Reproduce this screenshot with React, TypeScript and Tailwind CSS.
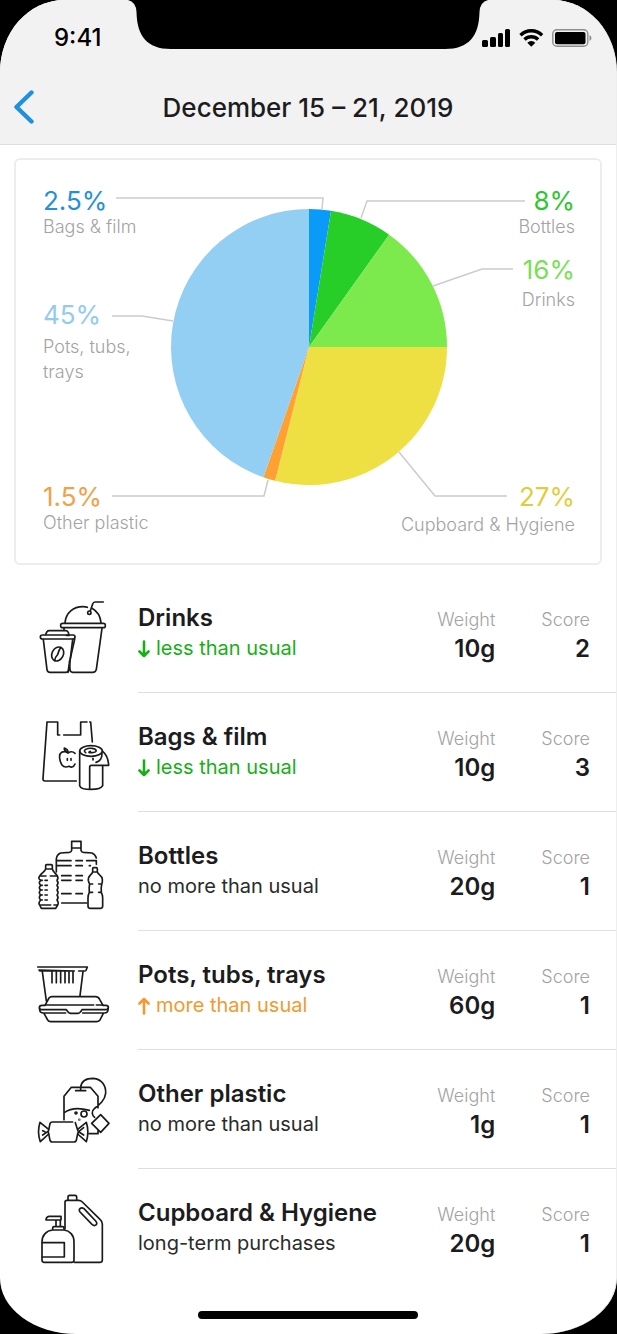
import type { ReactNode } from 'react';

type Trend = 'less' | 'more' | null;

interface Category {
  name: string;
  note: string;
  trend: Trend;
  weight: string;
  score: number;
  icon: ReactNode;
}

const slices = [
  { from: 0, to: 9.2, color: '#0a9bf8' },
  { from: 9.2, to: 35.5, color: '#27ce27' },
  { from: 35.5, to: 90, color: '#7cea4c' },
  { from: 90, to: 194.2, color: '#eee042' },
  { from: 194.2, to: 199.3, color: '#ffa033' },
  { from: 199.3, to: 360, color: '#93cff3' },
];

const leaders = [
  '100,38 307,38 306,49',
  '509,41 351,41 345,58',
  '497,109 466,109 417,126',
  '491,336 419,336 383,292',
  '96,336 248,336 252,320',
  '96,156 126,156 157,161',
];

const labels = [
  { x: 27, y: 50, value: '2.5%', color: '#2391da', lines: ['Bags & film'], textY: 73, end: false },
  { x: 27, y: 164, value: '45%', color: '#93cbef', lines: ['Pots, tubs,', 'trays'], textY: 193, end: false },
  { x: 27, y: 346, value: '1.5%', color: '#f2a246', lines: ['Other plastic'], textY: 369, end: false },
  { x: 559, y: 50, value: '8%', color: '#2fc52f', lines: ['Bottles'], textY: 73, end: true },
  { x: 559, y: 119, value: '16%', color: '#79df55', lines: ['Drinks'], textY: 146, end: true },
  { x: 559, y: 346, value: '27%', color: '#ddcf3a', lines: ['Cupboard & Hygiene'], textY: 371, end: true },
];

function slicePath(from: number, to: number) {
  const point = (deg: number) => {
    const a = (deg * Math.PI) / 180;
    return `${293 + 138 * Math.sin(a)} ${187 - 138 * Math.cos(a)}`;
  };
  return `M293 187L${point(from)}A138 138 0 ${to - from > 180 ? 1 : 0} 1 ${point(to)}Z`;
}

function LineIcon({ viewBox, children }: { viewBox: string; children: ReactNode }) {
  return (
    <svg
      viewBox={viewBox}
      className="h-20 w-20"
      fill="none"
      stroke="#1a1a1a"
      strokeWidth="5"
      strokeLinecap="round"
      strokeLinejoin="round"
      aria-hidden="true"
    >
      {children}
    </svg>
  );
}

const drinksIcon = (
  <LineIcon viewBox="42 24 240 240">
    <path d="M135 110C138 80 160 62 189 62C194 62 198 62 202 64M216 67C232 76 241 90 243 110" />
    <path d="M250 48H225Q220 48 218 54L211 74" />
    <circle cx="208" cy="80" r="5" />
    <rect x="122" y="112" width="134" height="13" rx="6" />
    <path d="M132 126V132M246 127L229 250Q227 259 218 259H158Q150 259 150 250L148 226M164 160L149 226L144 259" />
    <path d="M77 145L81 137Q83 134 88 134H137Q142 134 145 139L147 148H139" />
    <rect x="61" y="147" width="104" height="12" rx="6" />
    <path d="M70 161L81 251Q82 259 90 259H138Q145 259 147 251L158 161" />
    <ellipse cx="113" cy="204" rx="17" ry="22" transform="rotate(28 113 204)" />
    <path d="M122 185C114 195 116 202 112 207C107 212 105 218 104 223" />
  </LineIcon>
);

const bagsIcon = (
  <LineIcon viewBox="42 381 240 240">
    <path d="M169 585H75Q68 585 69 577L81 408H113V447H119M131 447H182V408H201M209 408H212L217 468" />
    <path d="M144 501C138 497 131 496 125 499C115 505 118 524 126 537C132 545 139 544 147 541C153 544 160 546 165 534M144 501C150 497 159 496 165 502M144 501C145 494 141 489 133 486C132 493 136 497 144 499" />
    <path d="M142 518V523M153 518V523" />
    <ellipse cx="213" cy="495" rx="34" ry="16" />
    <path d="M197 500C186 492 202 486 216 487C232 489 233 499 216 500C208 501 203 499 211 496" />
    <path d="M179 496V599C184 614 241 614 248 599V540M248 496C258 504 265 520 266 538H214Q209 538 209 544V608M246 503C246 520 238 526 228 529M219 517V522" />
  </LineIcon>
);

const bottlesIcon = (
  <LineIcon viewBox="42 18 240 240">
    <path d="M155 66V46H183V66M155 66H183M155 66V73Q154 78 148 79L122 81Q110 86 109 99V138M183 66V73Q184 78 190 79L216 81Q226 85 229 96" />
    <path d="M110 104H153M168 104H187M200 104H229V115M110 119H153M168 119H187M208 119H211M125 149H153M168 149H187M125 163H153M168 163H187M125 203H153M168 203H187M125 231H200" />
    <path d="M77 129V118Q77 116 80 116H94Q97 116 97 119V129M77 129H97M77 129C74 138 66 140 59 150Q53 158 62 163Q54 170 62 178Q54 185 62 192Q54 200 62 207Q54 214 62 222Q54 231 59 237L64 247H107L113 237Q117 230 111 222Q117 214 111 207Q117 200 111 192Q117 185 111 178Q117 170 111 163Q116 156 112 150C106 141 99 138 97 129" />
    <path d="M62 150H78M91 150H111M62 163H67M75 163H82M62 178H67M75 178H82M62 192H67M75 192H82M62 207H67M75 207H82M62 222H67M75 222H82M62 237H92M102 237H112" />
    <path d="M218 138V127Q218 125 221 125H229Q232 125 232 128V138M218 138H232M218 138C216 147 203 147 205 164Q207 170 209 174C206 186 208 192 208 199Q204 207 204 215V240Q204 247 211 247H241Q248 247 248 240V215Q248 207 244 199C243 191 243 184 245 176Q248 168 247 160C247 147 234 147 232 138M208 174H218M236 174H244M208 199H218M236 199H244" />
  </LineIcon>
);

const potsIcon = (
  <LineIcon viewBox="42 375 240 240">
    <path d="M53 423H202L198 433Q197 435 193 435H176M163 435H62Q58 435 57 432Z" />
    <path d="M67 437L79 525M189 437L180 509M96 437V470M109 437V470M122 437V470M135 437V470M147 437V470M159 437V470" />
    <path d="M75 538L87 516Q90 512 96 512H226Q235 512 239 520L249 538M75 537H221M229 537H249" />
    <path d="M75 538H66Q58 538 58 545Q58 551 66 551H139L145 559Q147 562 152 562H174Q179 562 182 557L186 551H257Q265 551 265 544Q265 538 257 538H249" />
    <path d="M59 547V552Q60 561 70 561H137M188 561H254Q263 561 264 552V547M72 562L83 582Q86 587 92 587H229Q236 587 240 582L250 562" />
  </LineIcon>
);

const otherIcon = (
  <LineIcon viewBox="42 27 240 240">
    <path d="M132 176V106L154 79H211L234 106V140M167 89H197M182 88V79C184 58 201 52 220 52C246 54 258 75 257 97C254 120 237 132 223 143C213 151 216 163 224 169" />
    <path d="M242 161L267 187L242 214L215 187ZM207 218H234V210M134 154C151 142 177 140 208 148" />
    <circle cx="168" cy="156" r="3" />
    <circle cx="192" cy="159" r="9" />
    <circle cx="178" cy="176" r="1" />
    <path d="M158 183H97Q92 183 90 188L86 207Q83 212 86 218L90 238Q92 243 97 243H162Q167 243 169 238L173 218Q177 212 173 207L166 185" />
    <path d="M86 205L60 184C54 203 54 223 61 242L86 219M68 222L83 212M68 209L75 212M173 205L199 184C205 203 205 223 199 242L173 219M177 211L191 200M177 213L191 222" />
  </LineIcon>
);

const cupboardIcon = (
  <LineIcon viewBox="42 384 240 240">
    <path d="M144 418V408Q144 403 149 403H165Q170 403 170 408V418M135 504V424Q135 418 141 418H176Q182 418 187 423L240 475Q247 481 247 489V597Q247 604 240 604H163" />
    <path d="M180 453C173 444 184 437 192 443L227 480C236 490 225 498 216 490Z" />
    <path d="M78 475Q80 466 88 466H123V477H78ZM108 478V496M121 478V496M98 507V501Q98 497 102 497H128Q132 497 132 501V507M98 507H132M98 507C78 509 66 524 66 542V597Q66 604 73 604H155Q162 604 162 597V542C162 522 149 509 132 507" />
    <path d="M67 545H133V588H67" />
  </LineIcon>
);

const categories: Category[] = [
  { name: 'Drinks', note: 'less than usual', trend: 'less', weight: '10g', score: 2, icon: drinksIcon },
  { name: 'Bags & film', note: 'less than usual', trend: 'less', weight: '10g', score: 3, icon: bagsIcon },
  { name: 'Bottles', note: 'no more than usual', trend: null, weight: '20g', score: 1, icon: bottlesIcon },
  { name: 'Pots, tubs, trays', note: 'more than usual', trend: 'more', weight: '60g', score: 1, icon: potsIcon },
  { name: 'Other plastic', note: 'no more than usual', trend: null, weight: '1g', score: 1, icon: otherIcon },
  { name: 'Cupboard & Hygiene', note: 'long-term purchases', trend: null, weight: '20g', score: 1, icon: cupboardIcon },
];

function StatusIcons() {
  return (
    <svg viewBox="0 0 110 18" className="h-[18px] w-[110px]" aria-hidden="true">
      <rect x="0" y="11" width="6" height="7" rx="1.5" />
      <rect x="8" y="8" width="6" height="10" rx="1.5" />
      <rect x="16" y="4" width="5" height="14" rx="1.5" />
      <rect x="23" y="0" width="5" height="18" rx="1.5" />
      <g fill="none" stroke="#000" strokeWidth="3.4">
        <path d="M38.5 6.2a15.5 15.5 0 0 1 21.6 0" />
        <path d="M42.5 10.5a9.8 9.8 0 0 1 13.6 0" />
      </g>
      <path d="M45.3 13.8a5.6 5.6 0 0 1 8 0L49.3 17.8Z" />
      <rect x="70.8" y="0.8" width="35" height="16.5" rx="4" fill="none" stroke="#8e8e8e" strokeWidth="1.4" />
      <rect x="73" y="3" width="30.5" height="12.2" rx="2" />
      <path d="M107.5 6Q109.5 7 109.5 9T107.5 12Z" fill="#8e8e8e" />
    </svg>
  );
}

function TrendArrow({ trend }: { trend: 'less' | 'more' }) {
  return (
    <svg
      viewBox="0 0 12 18"
      className="h-[18px] w-3"
      fill="none"
      stroke="currentColor"
      strokeWidth="2.6"
      strokeLinecap="round"
      strokeLinejoin="round"
      aria-hidden="true"
    >
      <path d={trend === 'less' ? 'M6 1.5V16M1.5 11.5L6 16L10.5 11.5' : 'M6 16.5V2M1.5 6.5L6 2L10.5 6.5'} />
    </svg>
  );
}

function Stat({ label, value }: { label: string; value: string | number }) {
  return (
    <div className="text-right">
      <dt className="text-lg leading-[29px] font-light text-[#a3a3a3]">{label}</dt>
      <dd className="text-2xl leading-[29px] font-semibold">{value}</dd>
    </div>
  );
}

function CategoryRow({ category }: { category: Category }) {
  const { name, note, trend, weight, score, icon } = category;
  const noteColor = trend === 'less' ? 'text-[#16b016]' : trend === 'more' ? 'text-[#f29a2e]' : 'text-[#2b2b2b]';
  return (
    <li className="group flex h-[119px] items-center">
      <div className="flex w-[138px] shrink-0 pl-[34px]">{icon}</div>
      <div className="flex flex-1 items-center self-stretch border-b border-[#dfdfdf] pr-[26px] group-last:border-transparent">
        <div className="flex-1">
          <h2 className="text-2xl leading-[31px] font-semibold">{name}</h2>
          <p className={`flex items-center gap-1.5 text-xl leading-[31px] ${noteColor}`}>
            {trend && <TrendArrow trend={trend} />}
            {note}
          </p>
        </div>
        <dl className="flex gap-[46px] pt-0.5">
          <Stat label="Weight" value={weight} />
          <Stat label="Score" value={score} />
        </dl>
      </div>
    </li>
  );
}

export default function App() {
  return (
    <div className="min-h-screen bg-black font-['Inter',sans-serif] text-[#1c1c1e]">
      <div className="relative flex min-h-screen flex-col overflow-hidden rounded-[64px_64px_76px_76px/72px_72px_56px_56px] border-r border-[#eeeeee] bg-white">
        {/* Header */}
        <header className="border-b border-[#dedede] bg-[#f2f2f2]">
          <div className="flex h-[74px] items-center justify-between pt-0.5 pr-6 pl-[54px] text-black">
            <span className="text-2xl font-medium">9:41</span>
            <StatusIcons />
          </div>
          <div className="grid h-[70px] grid-cols-[48px_1fr_48px] items-center pb-1">
            <button type="button" aria-label="Back" className="pl-3.5">
              <svg viewBox="0 0 20 34" className="h-[34px] w-5" fill="none" stroke="#1e90dd" strokeWidth="4.4" strokeLinecap="round" strokeLinejoin="round">
                <path d="M17.5 2.5L2.5 17L17.5 31.5" />
              </svg>
            </button>
            <h1 className="text-center text-[26px] font-medium">December 15 – 21, 2019</h1>
          </div>
        </header>
        <svg viewBox="0 0 360 50" className="absolute top-0 left-1/2 h-[50px] w-[360px] -translate-x-1/2" aria-hidden="true">
          <path d="M0 0Q8 2 8.5 12C9 36 19 49 43 49H317C341 49 351 36 351.5 12Q352 2 360 0Z" />
        </svg>

        <main>
          {/* Pie chart */}
          <section className="mx-3.5 mt-[13px] rounded-md border-2 border-[#ededed]">
            <svg viewBox="0 0 584 403" className="w-full" role="img" aria-label="Plastic by category">
              <g fill="none" stroke="#cccccc" strokeWidth="1.5">
                {leaders.map((points) => (
                  <polyline key={points} points={points} />
                ))}
              </g>
              {slices.map((slice) => (
                <path key={slice.from} d={slicePath(slice.from, slice.to)} fill={slice.color} />
              ))}
              {labels.map((label) => (
                <g key={label.value} className={label.end ? '[text-anchor:end]' : ''}>
                  <text x={label.x} y={label.y} fill={label.color} className="text-[26px]">
                    {label.value}
                  </text>
                  {label.lines.map((line, i) => (
                    <text key={line} x={label.x} y={label.textY + i * 25} className="fill-[#a3a3a3] text-lg font-light">
                      {line}
                    </text>
                  ))}
                </g>
              ))}
            </svg>
          </section>

          {/* Categories */}
          <ul className="mt-[9px]">
            {categories.map((category) => (
              <CategoryRow key={category.name} category={category} />
            ))}
          </ul>
        </main>

        <footer className="mt-auto flex justify-center pt-5 pb-[15px]">
          <div className="h-2 w-[220px] rounded-full bg-black" />
        </footer>
      </div>
    </div>
  );
}
